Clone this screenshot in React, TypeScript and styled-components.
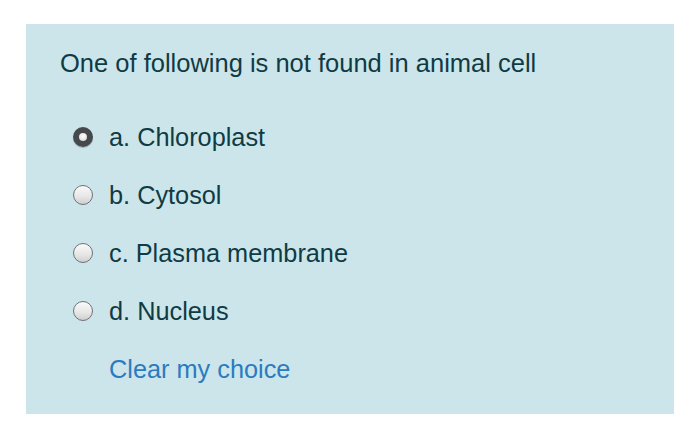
import React, { useState } from "react";
import styled, { createGlobalStyle } from "styled-components";

const options = [
  { key: "a", label: "Chloroplast" },
  { key: "b", label: "Cytosol" },
  { key: "c", label: "Plasma membrane" },
  { key: "d", label: "Nucleus" },
];

export default function App() {
  const [choice, setChoice] = useState<string | null>("a");

  return (
    <>
      <GlobalStyle />
      <Page>
        <QuestionBox>
          <QuestionText>One of following is not found in animal cell</QuestionText>
          <OptionList>
            {options.map((opt) => (
              <OptionRow key={opt.key} onClick={() => setChoice(opt.key)}>
                <Radio checked={choice === opt.key} />
                <OptionLabel>
                  {opt.key}. {opt.label}
                </OptionLabel>
              </OptionRow>
            ))}
            <ClearLink onClick={() => setChoice(null)}>Clear my choice</ClearLink>
          </OptionList>
        </QuestionBox>
      </Page>
    </>
  );
}

const GlobalStyle = createGlobalStyle`
  body {
    margin: 0;
    background: #ffffff;
    font-family: "Liberation Sans", Arial, sans-serif;
  }
`;

const Page = styled.div`
  padding: 24px 26px 23px 26px;
`;

const QuestionBox = styled.div`
  background: #cce5ea;
  height: 390px;
  box-sizing: border-box;
  padding: 24px 34px 0 34px;
`;

const QuestionText = styled.div`
  font-size: 25.5px;
  line-height: 30px;
  color: #0f3b44;
`;

const OptionList = styled.div`
  display: flex;
  flex-direction: column;
  margin-top: 30px;
  padding-left: 13px;
`;

const OptionRow = styled.div`
  display: flex;
  align-items: center;
  height: 58px;
  gap: 16px;
  cursor: pointer;
`;

const Radio = styled.span<{ checked: boolean }>`
  flex: none;
  width: 20px;
  height: 20px;
  border-radius: 50%;
  box-sizing: border-box;
  border: ${(p) => (p.checked ? "6px solid #45494b" : "1.5px solid #6f7274")};
  background: ${(p) =>
    p.checked
      ? "radial-gradient(circle at 50% 40%, #ffffff 0%, #dedede 70%, #a0a0a0 100%)"
      : "linear-gradient(180deg, #fafafa 0%, #e6e6e6 60%, #cfcfcf 100%)"};
  box-shadow: ${(p) => (p.checked ? "0 1px 1px rgba(0,0,0,0.25)" : "none")};
`;

const OptionLabel = styled.span`
  font-size: 25.3px;
  color: #0f3b44;
`;

const ClearLink = styled.a`
  display: flex;
  align-items: center;
  height: 58px;
  padding-left: 36px;
  font-size: 25.3px;
  color: #2b7bc0;
  cursor: pointer;
`;
